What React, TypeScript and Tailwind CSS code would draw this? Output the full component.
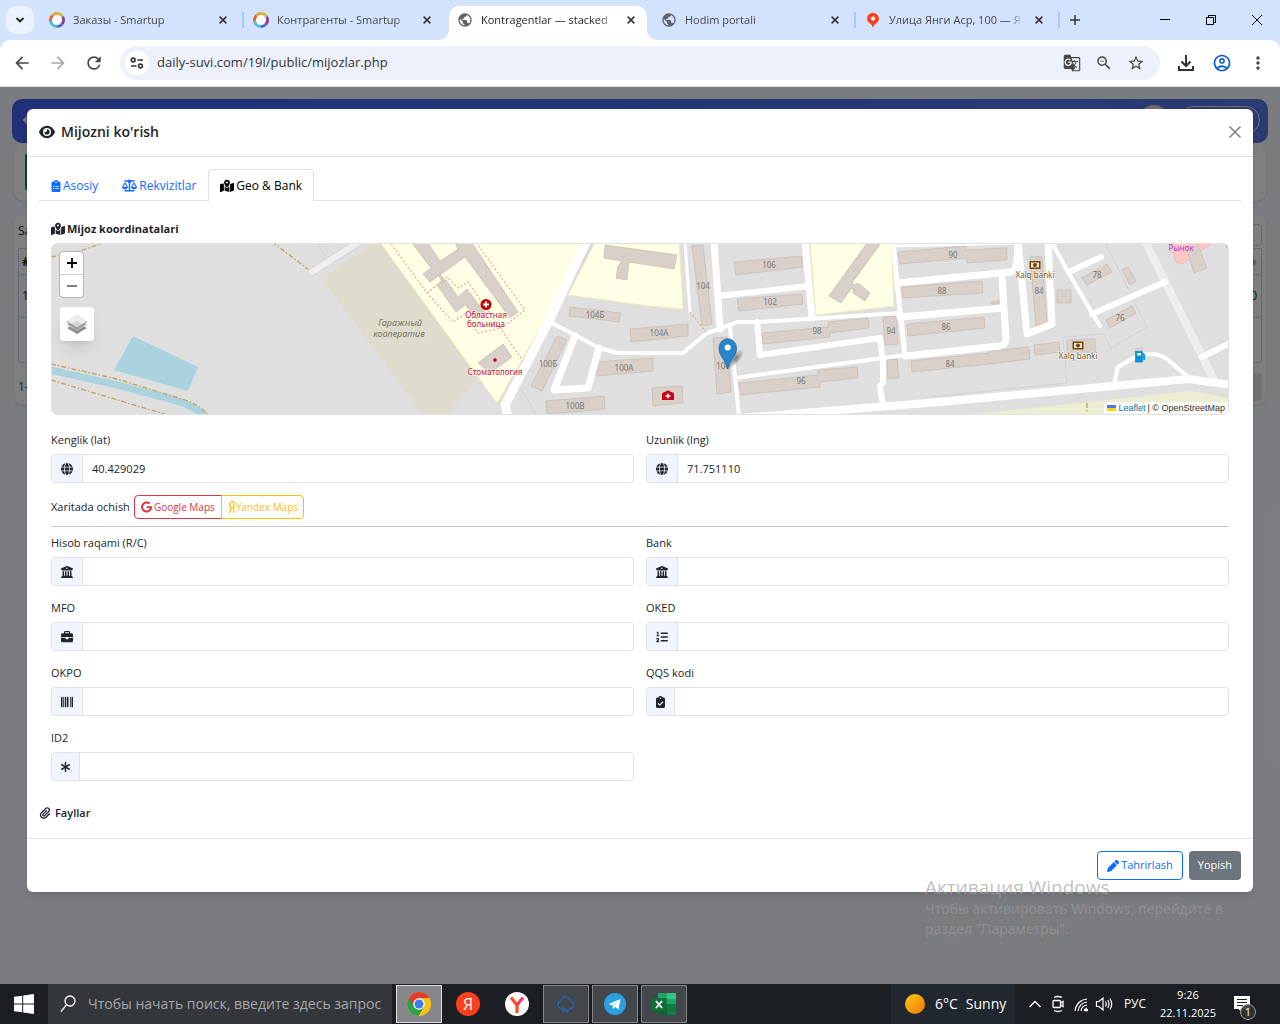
import type { ComponentType, ReactNode } from 'react';
import {
  FaAsterisk,
  FaBarcode,
  FaBriefcase,
  FaBuildingColumns,
  FaClipboardCheck,
  FaClipboardList,
  FaEye,
  FaGlobe,
  FaGoogle,
  FaListOl,
  FaMapLocationDot,
  FaPaperclip,
  FaPen,
  FaScaleBalanced,
  FaYandex,
} from 'react-icons/fa6';
import {
  MdArrowBack,
  MdArrowForward,
  MdGTranslate,
  MdMoreVert,
  MdOutlineAccountCircle,
  MdPublic,
  MdRefresh,
  MdStarBorder,
  MdZoomOut,
} from 'react-icons/md';

type Icon = ComponentType<{ className?: string }>;

/* ---------- browser ---------- */

function SmartupIcon() {
  return (
    <svg viewBox="0 0 16 16" className="size-4 shrink-0" fill="none" strokeWidth="3">
      <circle cx="8" cy="8" r="5.500" fill="#fff" />
      <path d="M8 1.600A6.400 6.400 0 0 1 13.500 4.800" stroke="#c9c23c" />
      <path d="M13.500 4.800A6.400 6.400 0 0 1 13 12" stroke="#8a3f9e" />
      <path d="M13 12A6.400 6.400 0 0 1 8 14.400" stroke="#5b62c0" />
      <path d="M8 14.400A6.400 6.400 0 0 1 1.600 9" stroke="#4fbce0" />
      <path d="M1.600 9A6.400 6.400 0 0 1 3.500 3.500" stroke="#e8632c" />
      <path d="M3.500 3.500A6.400 6.400 0 0 1 8 1.600" stroke="#e8a13c" />
      <path d="M4.500 4.600 8 3l4.300 2 .9 3.800-3 3.800-4.200.2L3 9z" fill="#fff" />
    </svg>
  );
}

function PinIcon() {
  return (
    <svg viewBox="0 0 16 16" className="size-4 shrink-0">
      <path d="M8 .8a6 6 0 0 0-6 6c0 3.400 3.600 4.600 5 6.700.4.700.5 1.800 1 1.800s.6-1.100 1-1.800c1.400-2.100 5-3.300 5-6.700a6 6 0 0 0-6-6z" fill="#fc3f1d" />
      <circle cx="8" cy="6.600" r="2.100" fill="#fff" />
    </svg>
  );
}

function CloseGlyph() {
  return (
    <svg viewBox="0 0 8 8" className="size-2" fill="none" stroke="currentColor" strokeWidth="1.500">
      <path d="m.6.6 6.800 6.800M7.400.6.6 7.400" />
    </svg>
  );
}

interface BrowserTabProps {
  title: string;
  icon: ReactNode;
  active?: boolean;
  divider?: boolean;
}

function BrowserTab({ title, icon, active, divider }: BrowserTabProps) {
  return (
    <div
      className={
        active
          ? 'relative mt-1.5 mr-1.5 flex h-[34px] w-[198px] min-w-0 items-center rounded-t-[10px] bg-white pb-1.5 pl-2 text-[#1f1f1f]'
          : 'relative mt-1.5 flex h-[34px] w-[204px] min-w-0 items-center pb-1.5 pl-2 text-[#474747]'
      }
    >
      {active && (
        <>
          <svg viewBox="0 0 10 10" className="absolute bottom-0 -left-2.5 size-2.5" fill="#fff">
            <path d="M10 0v10H0A10 10 0 0 0 10 0z" />
          </svg>
          <svg viewBox="0 0 10 10" className="absolute -right-2.5 bottom-0 size-2.5" fill="#fff">
            <path d="M0 0v10h10A10 10 0 0 1 0 0z" />
          </svg>
        </>
      )}
      {icon}
      <span className="ml-2 h-5 w-[135px] overflow-hidden text-[11px] leading-5 whitespace-nowrap [mask-image:linear-gradient(to_right,black_88%,transparent)]">
        {title}
      </span>
      <button aria-label="Закрыть" className="ml-[7px] flex size-4 items-center justify-center text-[#333]">
        <CloseGlyph />
      </button>
      {divider && <span className="ml-[11px] h-4 w-0.5 shrink-0 bg-[#a8c7fa]" />}
    </div>
  );
}

function TabStrip() {
  const globe = <MdPublic className="size-4 shrink-0 text-[#5f6368]" />;
  return (
    <div className="flex h-10 bg-[#d3e3fd]">
      <button aria-label="Поиск вкладок" className="mt-1.5 mr-[7px] ml-1.5 flex size-7 shrink-0 items-center justify-center rounded-[10px] bg-[#edf3fe]">
        <svg viewBox="0 0 10 10" className="size-2.5" fill="none" stroke="#1f1f1f" strokeWidth="1.800">
          <path d="m1.500 3 3.500 3.500L8.500 3" />
        </svg>
      </button>
      <div className="flex min-w-0">
        <BrowserTab title="Заказы - Smartup" icon={<SmartupIcon />} divider />
        <BrowserTab title="Контрагенты - Smartup" icon={<SmartupIcon />} />
        <BrowserTab title="Kontragentlar — stacked" icon={globe} active />
        <BrowserTab title="Hodim portali" icon={globe} divider />
        <BrowserTab title="Улица Янги Аср, 100 — Я" icon={<PinIcon />} divider />
      </div>
      <button aria-label="Новая вкладка" className="flex h-10 w-7 items-center justify-center">
        <svg viewBox="0 0 10 10" className="size-2.5" stroke="#333" strokeWidth="1.500">
          <path d="M5 0v10M0 5h10" />
        </svg>
      </button>
      <div className="ml-auto flex">
        <button aria-label="Свернуть" className="flex h-10 w-[46px] items-center justify-center">
          <svg viewBox="0 0 10 10" className="size-2.5" stroke="#000">
            <path d="M0 4.500h10" />
          </svg>
        </button>
        <button aria-label="Восстановить" className="flex h-10 w-[46px] items-center justify-center">
          <svg viewBox="0 0 10 10" className="size-2.5" fill="none" stroke="#000">
            <path d="M.5 2.500h7v7h-7zM2.500 2.500v-2h7v7h-2" />
          </svg>
        </button>
        <button aria-label="Закрыть окно" className="flex h-10 w-[46px] items-center justify-center">
          <svg viewBox="0 0 10 10" className="size-2.5" stroke="#000">
            <path d="m0 0 10 10M10 0 0 10" />
          </svg>
        </button>
      </div>
    </div>
  );
}

function Toolbar() {
  return (
    <div className="bg-[#d3e3fd]">
      <div className="flex h-[47px] items-center rounded-t-[10px] border-b border-[#dcdcdc] bg-white text-[#474747]">
        <div className="flex w-[120px] shrink-0 gap-4 pl-3">
          <button aria-label="Назад"><MdArrowBack className="size-5" /></button>
          <button aria-label="Вперёд"><MdArrowForward className="size-5 text-[#a9a9a9]" /></button>
          <button aria-label="Обновить"><MdRefresh className="size-5" /></button>
        </div>
        <div className="flex h-[34px] min-w-0 flex-1 items-center rounded-full bg-[#ecf1fb] pr-[15px] pl-[5px]">
          <span className="flex size-6 shrink-0 items-center justify-center rounded-full bg-white">
            <svg viewBox="0 0 14 12" className="h-3 w-3.5" fill="none" stroke="#333" strokeWidth="1.600">
              <circle cx="3.200" cy="3" r="1.900" />
              <path d="M7.500 3H13M1 9h5.500" />
              <circle cx="10.500" cy="9" r="1.900" />
            </svg>
          </span>
          <input
            aria-label="Адресная строка"
            defaultValue="daily-suvi.com/19l/public/mijozlar.php"
            className="ml-2 min-w-0 flex-1 bg-transparent text-[13px] text-[#333] outline-none"
          />
          <div className="flex gap-3.5">
            <button aria-label="Перевести"><MdGTranslate className="size-[18px]" /></button>
            <button aria-label="Масштаб"><MdZoomOut className="size-[18px]" /></button>
            <button aria-label="В закладки"><MdStarBorder className="size-[18px]" /></button>
          </div>
        </div>
        <div className="flex shrink-0 items-center gap-4 pr-3 pl-4">
          <button aria-label="Загрузки">
            <svg viewBox="0 0 20 20" className="size-5" fill="none" stroke="#333" strokeWidth="2">
              <path d="M10 2v10.500M5.500 8.500 10 13l4.500-4.500M3 13v4h14v-4" />
            </svg>
          </button>
          <button aria-label="Профиль"><MdOutlineAccountCircle className="size-5 text-[#0b57d0]" /></button>
          <button aria-label="Меню"><MdMoreVert className="size-5" /></button>
        </div>
      </div>
    </div>
  );
}

/* ---------- page under the modal ---------- */

function ClientsPage() {
  return (
    <div className="bg-[#f7f9ff] px-3 pt-3 text-xs text-[#212529] [grid-area:1/1]">
      <div className="flex h-11 items-start justify-between rounded-[10px] bg-linear-to-r from-[#4460ee] to-[#5676e6] px-2 pt-[7px]">
        <MdArrowBack className="mt-1.5 size-4 text-white" />
        <div className="flex gap-3">
          <span className="-mt-px size-7 rounded-full bg-[#ddd6d0]" />
          <span className="h-7 w-20 rounded-full border border-[#eee4d0]" />
        </div>
      </div>
      <div className="mx-0.5 flex h-[58px] rounded-[10px] bg-white px-[11px] py-2.5 shadow">
        <span className="w-20 rounded bg-[#198754]" />
      </div>
      <div className="mx-0.5 mt-3 h-[192px] rounded-[10px] bg-white px-1 pt-2 shadow">
        <div className="flex h-[27px] items-center justify-between">
          <span className="-mt-2">Sa</span>
          <span className="h-[22px] w-40 rounded border border-[#ced4da]" />
        </div>
        <table className="w-full border-collapse">
          <tbody>
            <tr className="h-[26px]">
              <th className="border border-[#c6d2f0] px-[3px] text-left">#</th>
              <th className="border border-[#c6d2f0] px-1 text-right text-[#b5b5b5]">♦</th>
            </tr>
            <tr className="h-[43px]">
              <td className="border border-[#c6d2f0] px-[3px] text-left">1</td>
              <td className="border border-[#c6d2f0] px-1 text-right">0</td>
            </tr>
            <tr className="h-[45px]">
              <td className="border border-[#c6d2f0]" />
              <td className="border border-[#c6d2f0]" />
            </tr>
          </tbody>
        </table>
        <div className="mt-2.5 flex items-center justify-between">
          <span className="text-[#30506e]">1-</span>
          <span className="h-7 w-20 rounded bg-[#e1e4e8]" />
        </div>
      </div>
    </div>
  );
}

/* ---------- map ---------- */

const BUILDINGS = [
  '412,243 428,243 440,261 458,249 455,243 472,243 518,312 510,318 465,257 430,282 423,274 431,268',
  '437,285 446,280 458,297 467,289 485,313 477,319 465,305 456,312',
  '438,275 440,274 445,281 443,283',
  '478,363 503,344 512,357 490,373',
  '570,307 621,313 619,322 569,316',
  '557,336 567,340 542,391 531,386',
  '595,362 653,358 653,371 597,376',
  '546,401 604,396 605,409 547,414',
  '630,329 688,324 688,336 631,342',
  '605,245 677,255 674,269 629,262 627,280 616,278 618,266 622,261 604,258',
  '692,246 703,245 712,324 702,326',
  '734,262 802,256 802,267 736,275',
  '867,243 881,243 852,283 855,285 858,283 870,293 865,301 853,293 854,289 851,289 841,303 829,296',
  '737,299 802,294 803,304 739,311',
  '762,333 828,327 828,322 868,318 869,328 830,333 830,337 763,344',
  '883,317 896,316 898,344 885,345',
  '713,338 727,337 731,392 717,394',
  '739,383 818,375 818,370 857,367 858,378 820,382 820,387 741,395',
  '887,360 897,359 899,378 888,379',
  '898,252 966,246 966,250 1007,248 1007,260 967,263 966,258 900,264',
  '902,287 982,281 983,293 903,298',
  '907,324 984,317 985,328 908,336',
  '911,361 989,353 989,351 1029,347 1030,359 990,364 912,372',
  '1034,345 1059,342 1060,352 1035,355',
  '1030,256 1042,257 1047,323 1036,326',
  '1057,290 1071,290 1071,303 1057,303',
  '991,302 999,301 999,304 991,304',
  '1082,278 1107,264 1112,272 1087,285',
  '1122,270 1128,267 1136,281 1130,285',
  '1106,320 1132,306 1136,313 1110,328',
  '1067,340 1095,339 1096,352 1067,352',
  '1187,250 1198,245 1207,268 1194,273',
  '1135,349 1142,348 1142,353 1135,353',
  '652,388 682,386 683,403 653,406',
];

const ROADS: { d: string; w: number }[] = [
  { d: 'M587 240 550 319 505 405 508 417', w: 9 },
  { d: 'M550 322 575 335 599 348 618 353 683 353 707 333 722 328 737 322 757 322 900 313', w: 4 },
  { d: 'M575 336 554 390 588 388 599 348', w: 7 },
  { d: 'M685 241 690 312', w: 3 },
  { d: 'M714 241 720 329', w: 7 },
  { d: 'M718 296 809 286', w: 6 },
  { d: 'M805 241 812 318', w: 7 },
  { d: 'M757 322 760 355 880 338 883 362 883 383 880 386 883 407', w: 6 },
  { d: 'M735 378 883 358 905 355', w: 4 },
  { d: 'M893 241 897 283 905 355', w: 5 },
  { d: 'M897 283 1010 272 Q1016 271 1017 260L1018 241', w: 7 },
  { d: 'M893 246 1018 243', w: 3 },
  { d: 'M900 317 1003 308', w: 7 },
  { d: 'M905 356 1000 346 Q1006 345 1006 338L1002 278', w: 7 },
  { d: 'M730 327 739 417', w: 4 },
  { d: 'M1018 241 1027 334 1052 324 1048 241', w: 7 },
  { d: 'M1052 243 1068 272 1092 313 1100 326', w: 4 },
  { d: 'M1069 272 1101 257', w: 6 },
  { d: 'M1092 314 1165 282', w: 6 },
  { d: 'M1202 357 1232 342', w: 6 },
  { d: 'M1114 384 1118 367 1137 356 Q1155 351 1167 359L1188 377', w: 4 },
  { d: 'M740 418 940 402 1188 379 1232 385', w: 8 },
];

const HOUSE_NUMBERS: { x: number; y: number; t: string }[] = [
  { x: 595, y: 318, t: '104Б' },
  { x: 548, y: 367, t: '100Б' },
  { x: 624, y: 371, t: '100А' },
  { x: 575, y: 409, t: '100В' },
  { x: 659, y: 336, t: '104А' },
  { x: 703, y: 289, t: '104' },
  { x: 769, y: 268, t: '106' },
  { x: 770, y: 305, t: '102' },
  { x: 817, y: 334, t: '98' },
  { x: 891, y: 334, t: '94' },
  { x: 723, y: 369, t: '100' },
  { x: 801, y: 384, t: '96' },
  { x: 953, y: 258, t: '90' },
  { x: 942, y: 294, t: '88' },
  { x: 946, y: 330, t: '86' },
  { x: 950, y: 367, t: '84' },
  { x: 1039, y: 294, t: '84' },
  { x: 1097, y: 278, t: '78' },
  { x: 1120, y: 321, t: '76' },
];

function BankMark({ x, y }: { x: number; y: number }) {
  return (
    <g transform={`translate(${x} ${y})`}>
      <rect x="-5.500" y="-4" width="11" height="8" fill="#734a08" />
      <path d="M-4 -2.500h8v5h-8z" fill="#e9dfd2" />
      <circle r="2" fill="#734a08" />
    </g>
  );
}

function MapTiles() {
  return (
    <svg
      viewBox="51 244 1178 170"
      preserveAspectRatio="xMidYMid slice"
      className="block h-full w-full bg-[#dfdfdf] font-['Noto_Sans',sans-serif]"
      textAnchor="middle"
    >
      <defs>
        <radialGradient id="pin-shadow">
          <stop offset="0" stopColor="#000" stopOpacity=".5" />
          <stop offset="1" stopColor="#000" stopOpacity="0" />
        </radialGradient>
      </defs>
      <path d="M322 279 374 241h6l98 136-31 38h-24z" fill="#dedccc" />
      <path d="M963 415 1190 391l40 7v17z" fill="#ebeed2" />
      <g fill="#ffffe5" stroke="#f0eeb0" strokeWidth=".8">
        <path d="M379 241h206l-7 22-81 140z" />
        <path d="M596 241 568 295l82 11 33 3-4-68z" />
        <path d="M810 241h81l3 65-78 9z" />
      </g>
      <path d="M1170 241h46l-34 23-6-2z" fill="#ffc8c4" stroke="#f0a8a4" strokeWidth=".6" />
      <path d="m133 336 65 31-10 24-74-21z" fill="#aad3df" />
      <path d="M50 370 117 385 177 401Q190 404 206 417" fill="none" stroke="#aad3df" strokeWidth="7" />
      <g fill="none" stroke="#cbcbcb" strokeWidth=".7">
        <path d="M318 244l7 12M1105 243l24 47M1135 303l12 24-36 21-7-14M1063 337l40-3M1063 337l4 46-137 14M520 387l16 27M594 241l-88 166" />
      </g>
      <g fill="none" stroke="#c49f58" strokeWidth="1.300" strokeDasharray="5 2 1.500 2">
        <path d="M51 257 80 251 106 242" />
        <path d="M272 242 308 269" />
        <path d="M51 364 117 379 185 400 Q200 405 208 415" />
        <path d="M51 380 168 415" />
        <path d="M1087 403v10" />
        <path d="M1225 243l5 9" />
      </g>
      <g fill="#d9d0c9" stroke="#c7bab0" strokeWidth=".7">
        {BUILDINGS.map((points) => (
          <polygon key={points} points={points} />
        ))}
      </g>
      <g fill="none" strokeLinecap="round">
        <path d="M312 272 362 240" stroke="#d0d0d0" strokeWidth="8" />
        <path d="M312 272 362 240" stroke="#efefef" strokeWidth="6.500" />
        <path d="M1145 241 1213 378" stroke="#eeeeee" strokeWidth="8" />
      </g>
      <g fill="none" stroke="#fff" strokeLinecap="round" strokeLinejoin="round">
        {ROADS.map((road) => (
          <path key={road.d} d={road.d} strokeWidth={road.w} />
        ))}
      </g>
      <g fill="none" stroke="#fa9a94" strokeWidth="1.100" strokeDasharray="2 2">
        <path d="M389 241 427 293 453 322 465 314 478 333 502 328 525 310 475 241" />
        <path d="M427 293 447 277 458 288 468 282 500 328 523 361" />
        <path d="M690 312 707 333" />
      </g>
      <g fill="#777" fontSize="8">
        {HOUSE_NUMBERS.map((n) => (
          <text key={`${n.x}-${n.y}`} x={n.x} y={n.y}>{n.t}</text>
        ))}
      </g>
      <g fill="#787663" fontSize="9" fontStyle="italic">
        <text x="400" y="326">Гаражный</text>
        <text x="399" y="337">кооператив</text>
      </g>
      <circle cx="486" cy="304.500" r="5.500" fill="#bf0000" />
      <path d="M486 301.500v6M483 304.500h6" stroke="#fff" strokeWidth="1.800" />
      <circle cx="495" cy="360" r="1.800" fill="#bf0000" />
      <g fill="#c8102e" stroke="#fff" strokeOpacity=".6" strokeWidth="1.500" paintOrder="stroke" fontSize="8">
        <text x="486" y="318">Областная</text>
        <text x="486" y="327">больница</text>
        <text x="495" y="375">Стоматология</text>
      </g>
      <path d="M662 400v-5q0-3 3-3 3-3 6 0 3 0 3 3v5z" fill="#c8001a" />
      <path d="M668 393.500v5M665.500 396h5" stroke="#fff" strokeWidth="1.400" />
      <BankMark x={1035} y={265} />
      <BankMark x={1078} y={345.5} />
      <g fill="#7d5a20" stroke="#fff" strokeOpacity=".6" strokeWidth="1.500" paintOrder="stroke" fontSize="8">
        <text x="1035" y="278">Xalq banki</text>
        <text x="1078" y="359">Xalq banki</text>
      </g>
      <text x="1181" y="251" fill="#a83cc0" fontSize="8">Рынок</text>
      <path d="M1135.500 351.500h7v10.500h-7zM1143 353l1.800 1.500v5h-1.500" fill="#0092da" stroke="#0092da" strokeWidth=".8" />
      <path d="M1137 353h4v2.500h-4z" fill="#fff" />
      <ellipse cx="735" cy="359" rx="12" ry="5" fill="url(#pin-shadow)" transform="rotate(-48 735 359)" />
      <path
        d="M727.500 369c-1-5-3.500-8.500-6-12.500-1.500-2.500-2.500-5-2.500-8.500a8.500 9 0 0 1 17.500 0c0 3.500-1 6-2.500 8.500-2.500 4-5.500 7.500-6.500 12.500z"
        fill="#2a84c9"
        stroke="#1f6ba8"
        strokeWidth=".8"
      />
      <circle cx="727.700" cy="347.500" r="3" fill="#fff" />
    </svg>
  );
}

function LeafletMap() {
  return (
    <div className="relative h-[172px] overflow-hidden rounded-md border border-[#dee2e6] text-black">
      <MapTiles />
      <div className="absolute top-[7px] left-[7px] w-[25px] rounded-sm border border-[#b5b5b5] bg-white">
        <button aria-label="Zoom in" className="flex h-[23px] w-full items-center justify-center border-b border-[#ccc]">
          <svg viewBox="0 0 10 10" className="size-2.5" stroke="#000" strokeWidth="1.800"><path d="M5 0v10M0 5h10" /></svg>
        </button>
        <button aria-label="Zoom out" className="flex h-[22px] w-full items-center justify-center">
          <svg viewBox="0 0 10 10" className="size-2.5" stroke="#000" strokeWidth="1.200"><path d="M0 5h10" /></svg>
        </button>
      </div>
      <button aria-label="Layers" className="absolute top-[63px] left-2 flex size-[34px] items-center justify-center rounded bg-white shadow-lg">
        <svg viewBox="0 0 22 22" className="size-[22px]">
          <path d="M1 15 11 21l10-6-3-1.500-7 4-7-4z" fill="#8f8f8f" />
          <path d="M1 11.500 11 17.500l10-6-3-1.500-7 4-7-4z" fill="#a5a5a5" />
          <path d="M1 8 11 14.500 21 8 11 2z" fill="#d4d4d4" />
          <path d="M1 8 11 14.500 21 8v1.200L11 15.500 1 9.200z" fill="#9a9a9a" />
          <path d="M11 2 21 8l-5 3-5-3.500-5 3.500-5-3z" fill="#ededed" />
        </svg>
      </button>
      <div className="absolute right-0 bottom-0 flex h-3 items-center gap-0.5 bg-white/80 px-[3px] font-['Liberation_Sans',sans-serif] text-[9px] leading-3 text-[#333]">
        <svg viewBox="0 0 9 6" className="h-1.5 w-[9px]">
          <path d="M0 0h9v3H0z" fill="#4c7be1" />
          <path d="M0 3h9v3H0z" fill="#ffd500" />
        </svg>
        <a href="#leaflet" className="text-[#0078a8]">Leaflet</a>
        <span>| © OpenStreetMap</span>
      </div>
    </div>
  );
}

/* ---------- modal ---------- */

interface FieldProps {
  id: string;
  label: string;
  icon: Icon;
  value?: string;
  narrow?: boolean;
}

function Field({ id, label, icon: FieldIcon, value, narrow }: FieldProps) {
  return (
    <div>
      <label htmlFor={id} className="mb-1 block h-5 leading-5">{label}</label>
      <div className="flex h-[29px] rounded border border-[#dee2e6]">
        <span className="flex shrink-0 items-center rounded-l border-r border-[#dee2e6] bg-[#f2f5ff] px-[9px]">
          <FieldIcon className={narrow ? 'h-3 w-[9px]' : 'size-3'} />
        </span>
        <input id={id} defaultValue={value} className="min-w-0 flex-1 rounded-r bg-white px-[9px] pt-px outline-none" />
      </div>
    </div>
  );
}

function Modal() {
  return (
    <div role="dialog" aria-label="Mijozni ko'rish" className="mx-[27px] mt-[22px] rounded-md bg-white text-[11px] text-[#212529] shadow-md">
      <div className="flex h-12 items-center justify-between border-b border-[#dee2e6] px-3 pb-px">
        <h5 className="flex items-center gap-1.5 text-sm font-semibold">
          <FaEye className="size-4" />
          Mijozni ko'rish
        </h5>
        <button aria-label="Yopish" className="text-[#7f7f7f]">
          <svg viewBox="0 0 12 12" className="size-3" stroke="currentColor" strokeWidth="1.500">
            <path d="m.5.5 11 11M11.500.5l-11 11" />
          </svg>
        </button>
      </div>

      <div className="p-3">
        <div role="tablist" className="flex border-b border-[#dee2e6] text-xs text-[#0d6efd]">
          <button role="tab" className="flex h-[31px] items-center gap-0.5 px-3 pt-0.5">
            <FaClipboardList className="h-3 w-2.5" />
            Asosiy
          </button>
          <button role="tab" className="flex h-[31px] items-center gap-0.5 px-3 pt-0.5">
            <FaScaleBalanced className="size-[15px]" />
            Rekvizitlar
          </button>
          <button role="tab" aria-selected="true" className="-mb-px flex h-8 items-center gap-0.5 rounded-t border border-b-0 border-[#dee2e6] bg-white px-[11px] text-black">
            <FaMapLocationDot className="size-3.5" />
            Geo &amp; Bank
          </button>
        </div>

        <div className="p-3">
          <h6 className="mt-1.5 mb-1 flex h-5 items-center gap-0.5 font-bold">
            <FaMapLocationDot className="size-3.5" />
            Mijoz koordinatalari
          </h6>
          <LeafletMap />

          <div className="mt-[15px] grid grid-cols-2 gap-3">
            <Field id="lat" label="Kenglik (lat)" icon={FaGlobe} value="40.429029" />
            <Field id="lng" label="Uzunlik (lng)" icon={FaGlobe} value="71.751110" />
          </div>

          <div className="mt-3 flex h-6 items-center">
            <span>Xaritada ochish</span>
            <div className="ml-1 flex text-[10px]">
              <a href="#google" className="flex h-6 items-center gap-0.5 rounded-l-sm border border-[#dc3545] px-1.5 text-[#dc3545]">
                <FaGoogle className="h-3 w-[11px]" />
                Google Maps
              </a>
              <a href="#yandex" className="-ml-px flex h-6 items-center rounded-r-sm border border-[#ffc107] px-[5px] text-[#ffc107]">
                <FaYandex className="h-3 w-[9px]" />
                Yandex Maps
              </a>
            </div>
          </div>

          <hr className="mt-[7px] mb-1.5 border-[#c8c9ca]" />

          <div className="grid grid-cols-2 gap-3">
            <Field id="account" label="Hisob raqami (R/C)" icon={FaBuildingColumns} />
            <Field id="bank" label="Bank" icon={FaBuildingColumns} />
            <Field id="mfo" label="MFO" icon={FaBriefcase} />
            <Field id="oked" label="OKED" icon={FaListOl} />
            <Field id="okpo" label="OKPO" icon={FaBarcode} />
            <Field id="qqs" label="QQS kodi" icon={FaClipboardCheck} narrow />
            <Field id="id2" label="ID2" icon={FaAsterisk} narrow />
          </div>
        </div>

        <h6 className="mt-2 mb-px flex h-6 items-center gap-1 font-semibold">
          <FaPaperclip className="size-3" />
          Fayllar
        </h6>
      </div>

      <div className="flex justify-end gap-1.5 border-t border-[#dee2e6] p-3">
        <button className="flex h-[29px] items-center gap-0.5 rounded border border-[#0d6efd] px-[9px] text-[#0d6efd]">
          <FaPen className="size-3" />
          Tahrirlash
        </button>
        <button className="h-[29px] rounded bg-[#6c757d] px-[9px] font-medium text-white">Yopish</button>
      </div>
    </div>
  );
}

/* ---------- taskbar ---------- */

function Taskbar() {
  return (
    <div className="flex h-10 shrink-0 items-stretch bg-[#1b1f24] text-white">
      <button aria-label="Пуск" className="flex w-12 items-center justify-center">
        <svg viewBox="0 0 20 20" className="size-5" fill="#fff">
          <path d="M0 2.800 8.200 1.700v7.800H0zM9.200 1.500 20 0v9.500H9.200zM0 10.500h8.200v7.800L0 17.200zM9.200 10.500H20V20L9.200 18.500z" />
        </svg>
      </button>
      <label className="flex w-[344px] items-center bg-[#33373b] pl-3">
        <svg viewBox="0 0 16 18" className="h-[18px] w-4" fill="none" stroke="#fff" strokeWidth="1.300">
          <circle cx="10" cy="6" r="5" />
          <path d="M6.500 9.800 1 16.500" />
        </svg>
        <input
          aria-label="Поиск"
          placeholder="Чтобы начать поиск, введите здесь запрос"
          className="ml-3 min-w-0 flex-1 bg-transparent text-sm outline-none placeholder:text-[#a6a8aa]"
        />
      </label>
      <div className="ml-1 flex gap-[3px] py-px">
        <button aria-label="Chrome" className="flex w-[46px] items-center justify-center border border-[#e0e0e0] bg-[#85878a]">
          <svg viewBox="0 0 24 24" className="size-6">
            <circle cx="12" cy="12" r="12" fill="#fbc116" />
            <path d="M12 12 1.600 6A12 12 0 0 0 11.500 24L17 15z" fill="#2ba24c" />
            <path d="M12 6h10.400A12 12 0 0 0 1.600 6L7 14.500z" fill="#e33b2e" />
            <circle cx="12" cy="12" r="5.800" fill="#fff" />
            <circle cx="12" cy="12" r="4.500" fill="#3b7ded" />
          </svg>
        </button>
        <button aria-label="Яндекс" className="flex w-[46px] items-center justify-center">
          <span className="flex size-6 items-center justify-center rounded-full bg-[#fc3f1d] text-base font-medium">Я</span>
        </button>
        <button aria-label="Яндекс Браузер" className="flex w-[46px] items-center justify-center">
          <svg viewBox="0 0 24 24" className="size-6" fill="none" strokeWidth="3.200">
            <circle cx="12" cy="12" r="12" fill="#fff" />
            <path d="M6 5.500 12 13v8" stroke="#ff4f1f" />
            <path d="m12 13 6-7.500" stroke="#f33a63" />
          </svg>
        </button>
        <button aria-label="Облако" className="flex w-[46px] items-center justify-center border border-[#84868a] bg-[#43474b]">
          <svg viewBox="0 0 20 18" className="h-[18px] w-5" fill="none" stroke="#2467b8" strokeWidth="1.300">
            <path d="M5 13.500a4 4 0 0 1-.5-7.500 5.500 5.500 0 0 1 10.500 0 4 4 0 0 1 0 7.500M5 13.500h2M13 13.500h2M7 12v4l2-2 2 3 2-3" />
          </svg>
        </button>
        <button aria-label="Telegram" className="flex w-[46px] items-center justify-center border border-[#84868a] bg-[#43474b]">
          <svg viewBox="0 0 22 22" className="size-[22px]">
            <circle cx="11" cy="11" r="11" fill="#2ba0dc" />
            <path d="m4.500 11 12-5-2 10.500-3.500-2.500-2 2-.5-3.500z" fill="#fff" />
            <path d="m8.500 12.500 5.500-4-4.500 5z" fill="#b5d6ea" />
          </svg>
        </button>
        <button aria-label="Excel" className="flex w-[46px] items-center justify-center border border-[#84868a] bg-[#43474b]">
          <svg viewBox="0 0 24 22" className="h-[22px] w-6">
            <path d="M6 0h9v6H6z" fill="#21a366" />
            <path d="M15 0h9v6h-9z" fill="#33c481" />
            <path d="M6 6h9v5H6z" fill="#107c41" />
            <path d="M15 6h9v5h-9z" fill="#21a366" />
            <path d="M6 11h9v11H6z" fill="#185c37" />
            <path d="M15 11h9v11h-9z" fill="#107c41" />
            <path d="M0 5h14v13H0z" fill="#0f7039" />
            <path d="m4 8 6 7M10 8l-6 7" stroke="#fff" strokeWidth="1.800" />
          </svg>
        </button>
      </div>
      <div className="ml-auto flex items-center">
        <div className="flex h-full w-[124px] items-center bg-[#20272e] pl-3.5 text-sm">
          <span className="size-5 rounded-full bg-linear-to-br from-[#ffc814] to-[#ee7408]" />
          <span className="ml-2.5">6°C</span>
          <span className="ml-2">Sunny</span>
        </div>
        <div className="flex items-center gap-[5px] pl-[11px]">
          <svg viewBox="0 0 18 18" className="size-[18px]" fill="none" stroke="#fff" strokeWidth="1.300">
            <path d="m3.500 12 5.500-5.500 5.500 5.500" />
          </svg>
          <svg viewBox="0 0 18 18" className="size-[18px]" fill="none" stroke="#fff" strokeWidth="1.300">
            <rect x="4" y="5.500" width="7.500" height="7" rx="1" />
            <path d="M11.500 8 14 6.500v5L11.500 10M5 2.500q4-2 8 0M5 15.500q4 2 8 0" />
          </svg>
          <svg viewBox="0 0 18 18" className="size-[18px]" fill="none" stroke="#fff" strokeWidth="1.200">
            <path d="M3 16A13 13 0 0 1 15 4M6 16a10 10 0 0 1 9-9M9 16a7 7 0 0 1 6-6M12 16a4 4 0 0 1 3-3" />
            <circle cx="14.500" cy="15" r="1" fill="#fff" />
          </svg>
          <svg viewBox="0 0 18 18" className="size-[18px]" fill="none" stroke="#fff" strokeWidth="1.200">
            <path d="M1.500 6.500H4l4-3.500v12l-4-3.500H1.500zM10.500 6.500q1.500 2.500 0 5M12.800 5q2.500 4 0 8M15 3.500q3.500 5.500 0 11" />
          </svg>
        </div>
        <span className="w-11 text-center text-xs">РУС</span>
        <div className="w-[62px] text-center text-[11px] leading-[18px]">
          <div>9:26</div>
          <div>22.11.2025</div>
        </div>
        <button aria-label="Уведомления" className="relative ml-2 flex w-[53px] pl-1">
          <svg viewBox="0 0 24 24" className="size-6">
            <path d="M3 4h16v13H10.500V20L7.500 17H3z" fill="#fff" />
            <path d="M6 7.500h10M6 10.500h10M6 13.500h6" stroke="#1b1f24" strokeWidth="1.100" />
          </svg>
          <span className="absolute -bottom-1 left-[13px] flex size-4 items-center justify-center rounded-full border border-[#9a9a9a] bg-[#333]/90 text-[11px]">1</span>
        </button>
      </div>
    </div>
  );
}

export default function App() {
  return (
    <div className="flex min-h-screen flex-col overflow-hidden font-['Open_Sans','Noto_Sans',sans-serif]">
      <TabStrip />
      <Toolbar />
      <main className="relative grid flex-1">
        <ClientsPage />
        <div className="z-10 bg-black/50 pb-10 [grid-area:1/1]">
          <Modal />
        </div>
        <div className="pointer-events-none absolute right-[45px] bottom-[45px] z-20 w-[310px] text-sm leading-5 text-[#a4a4a4]/50">
          <p className="text-[19px] leading-6 text-[#a4a4a4]/70">Активация Windows</p>
          <p>Чтобы активировать Windows, перейдите в раздел "Параметры".</p>
        </div>
      </main>
      <Taskbar />
    </div>
  );
}
